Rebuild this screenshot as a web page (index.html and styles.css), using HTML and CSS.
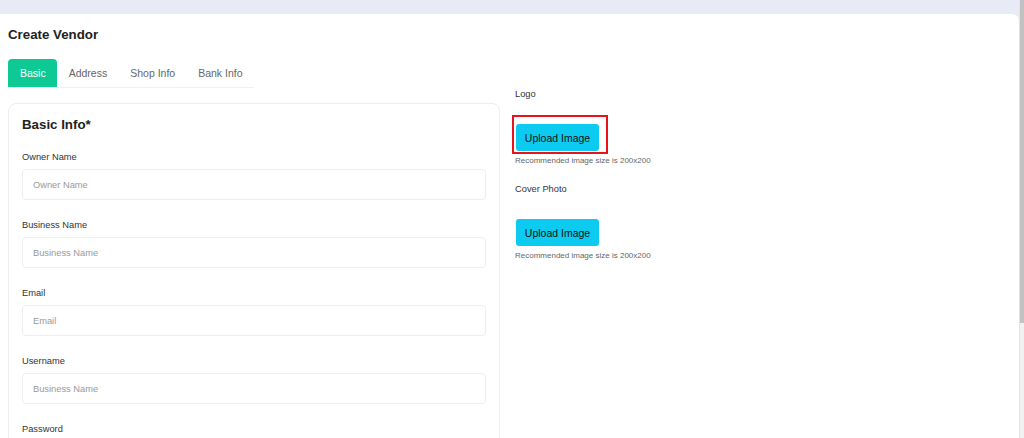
FILE: index.html
```html
<!DOCTYPE html>
<html lang="en">
<head>
  <meta charset="UTF-8">
  <meta name="viewport" content="width=device-width, initial-scale=1.0">
  <title>Create Vendor</title>
  <link rel="stylesheet" href="styles.css">
</head>
<body>

<div class="scroller">
  <div class="page">
    <h1 class="page-title">Create Vendor</h1>

    <div class="tabs">
      <a class="tab active" href="#">Basic</a>
      <a class="tab" href="#">Address</a>
      <a class="tab" href="#">Shop Info</a>
      <a class="tab" href="#">Bank Info</a>
    </div>

    <div class="row">
      <form class="card">
        <h2 class="card-title">Basic Info*</h2>

        <div class="field">
          <label for="owner-name">Owner Name</label>
          <input type="text" id="owner-name" placeholder="Owner Name">
        </div>

        <div class="field">
          <label for="business-name">Business Name</label>
          <input type="text" id="business-name" placeholder="Business Name">
        </div>

        <div class="field">
          <label for="email">Email</label>
          <input type="email" id="email" placeholder="Email">
        </div>

        <div class="field">
          <label for="username">Username</label>
          <input type="text" id="username" placeholder="Business Name">
        </div>

        <div class="field">
          <label for="password">Password</label>
          <input type="password" id="password" placeholder="Password">
        </div>
      </form>

      <div class="uploads">
        <div class="upload">
          <label>Logo</label>
          <div class="upload-box highlight">
            <button type="button" class="btn-upload">Upload Image</button>
          </div>
          <p class="hint">Recommended image size is 200x200</p>
        </div>

        <div class="upload">
          <label>Cover Photo</label>
          <div class="upload-box">
            <button type="button" class="btn-upload">Upload Image</button>
          </div>
          <p class="hint">Recommended image size is 200x200</p>
        </div>
      </div>
    </div>
  </div>
</div>

<!-- window scrollbar -->
<div class="scrollbar">
  <div class="scrollbar-thumb"></div>
</div>

</body>
</html>
```

FILE: styles.css
```css
html, body {
  height: 100%;
}

body {
  margin: 0;
  display: flex;
  overflow: hidden;
  font-family: "Liberation Sans", Arial, sans-serif;
  color: #222;
  background-color: #e8ebf5;
}

.scroller {
  flex: 1;
  min-width: 0;
  overflow: hidden;
}

.scrollbar {
  width: 4px;
  flex-shrink: 0;
  background-color: #f1f1f1;
  border-left: 1px solid #e4e4e4;
}

.scrollbar-thumb {
  height: 323px;
  background-color: #c1c1c1;
}

.page {
  margin-top: 14px;
  background-color: #fff;
  border-radius: 0 7px 0 0;
  padding: 12px 8px;
  min-height: 556px;
}

.page-title {
  margin: 0 0 15px;
  font-size: 13.3px;
  line-height: 18px;
  font-weight: bold;
  color: #222;
}

.tabs {
  display: inline-flex;
  border-bottom: 1px solid #f0f0f0;
}

.tab {
  display: block;
  padding: 0 11px 0 12px;
  height: 28px;
  line-height: 28px;
  font-size: 10.5px;
  color: #666;
  text-decoration: none;
  border-radius: 4px 4px 0 0;
}

.tab.active {
  background-color: #0fc994;
  color: #fff;
}

.row {
  display: grid;
  grid-template-columns: 492px 1fr;
  gap: 15px;
  align-items: start;
}

.card {
  margin-top: 15px;
  border: 1px solid #eee;
  border-radius: 8px;
  padding: 11px 13px 20px;
}

.card-title {
  margin: 0 0 15px;
  font-size: 13.3px;
  line-height: 20px;
  font-weight: bold;
  color: #222;
}

.field {
  margin-bottom: 18px;
}

.field:last-child {
  margin-bottom: 0;
}

label {
  display: block;
  font-size: 9.3px;
  line-height: 14px;
  color: #333;
  margin-bottom: 5px;
}

input {
  display: block;
  box-sizing: border-box;
  width: 100%;
  height: 31px;
  padding: 0 10px;
  border: 1px solid #eee;
  border-radius: 4px;
  font-family: inherit;
  font-size: 9.3px;
  color: #333;
}

input::placeholder {
  color: #999;
}

.upload {
  margin-bottom: 17px;
}

.upload label {
  line-height: 12px;
  margin-bottom: 0;
}

.upload-box {
  display: inline-block;
  margin: 15px 0 0 -3px;
  padding: 7px 7px 1px 2px;
  border: 2px solid transparent;
}

.upload-box.highlight {
  border-color: #e8141c;
}

.btn-upload {
  display: block;
  width: 83px;
  height: 27px;
  padding: 0;
  border: none;
  border-radius: 3px;
  background-color: #0dcaf0;
  color: #111;
  font-family: inherit;
  font-size: 10.5px;
  cursor: pointer;
}

.hint {
  margin: 2px 0 0;
  font-size: 8px;
  line-height: 10px;
  color: #666;
}
```
